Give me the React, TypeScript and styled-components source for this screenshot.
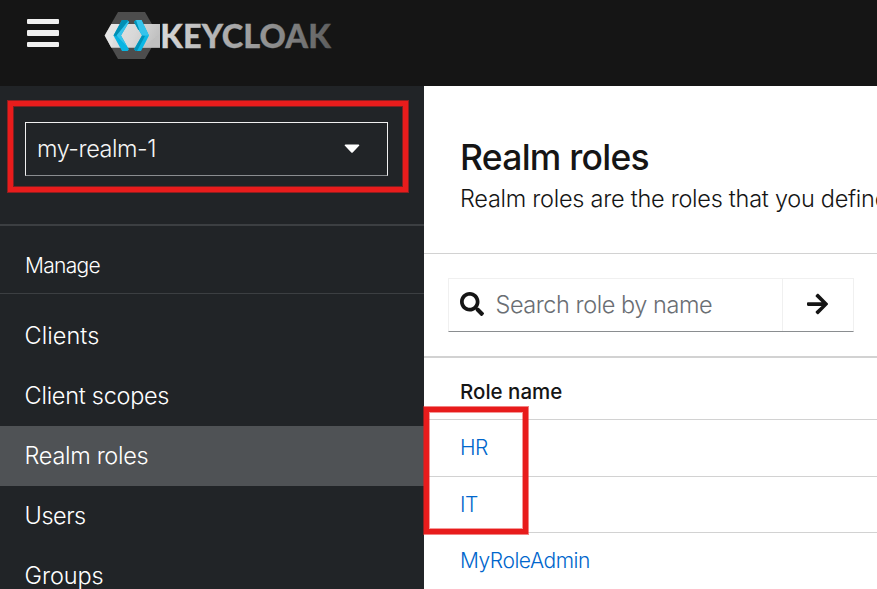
import React from 'react';
import styled, { createGlobalStyle } from 'styled-components';

const GlobalStyle = createGlobalStyle`
  *, *::before, *::after { box-sizing: border-box; }
  html, body { margin: 0; padding: 0; overflow: hidden; }
  body { background: #fff; font-family: 'Inter', sans-serif; font-weight: 300; color: #151515; }
  button, input { font: inherit; }
`;

const Page = styled.div`
  display: flex;
  flex-direction: column;
  width: 100%;
  height: 100vh;
  overflow: hidden;
`;

const Masthead = styled.header`
  display: flex;
  align-items: flex-start;
  flex: 0 0 86px;
  background: #151515;
`;

const MenuButton = styled.button`
  display: flex;
  flex-direction: column;
  gap: 6px;
  margin: 19px 0 0 27px;
  padding: 0;
  border: 0;
  background: none;
`;

const MenuBar = styled.span`
  width: 32px;
  height: 5.3px;
  border-radius: 1px;
  background: #f0f0f0;
`;

const Logo = styled.svg`
  display: block;
  margin: 11px 0 0 45px;
`;

const Body = styled.div`
  display: flex;
  flex: 1;
  min-height: 0;
`;

const Sidebar = styled.aside`
  flex: 0 0 424px;
  background: #212427;
  color: #fff;
  overflow: hidden;
`;

const RealmArea = styled.div`
  height: 140px;
  padding: 36px 36px 0 25px;
  border-bottom: 2px solid #3c3f42;
`;

const RealmSelect = styled.button`
  position: relative;
  display: flex;
  align-items: center;
  justify-content: space-between;
  width: 363px;
  height: 54px;
  padding: 0 27px 1px 11px;
  border: 1px solid #f0f0f0;
  border-bottom-color: #8a8d90;
  background: none;
  color: #f5f5f5;
  font-size: 23.5px;
  letter-spacing: -0.45px;
  text-align: left;
`;

const Highlight = styled.span<{ $x: number; $y: number; $w: number; $h: number }>`
  position: absolute;
  left: ${(p) => p.$x}px;
  top: ${(p) => p.$y}px;
  width: ${(p) => p.$w}px;
  height: ${(p) => p.$h}px;
  border: 5px solid #e81c1c;
  box-shadow: 0 0 0 1px rgba(232, 28, 28, 0.55), inset 0 0 0 1px rgba(232, 28, 28, 0.45);
  pointer-events: none;
`;

const GroupTitle = styled.h2`
  height: 68px;
  margin: 0;
  padding: 0 25px;
  border-bottom: 1px solid #3c3f42;
  font-size: 21px;
  font-weight: 300;
  line-height: 79px;
  letter-spacing: -0.7px;
`;

const NavList = styled.nav`
  padding-top: 12px;
`;

const NavItem = styled.a<{ $current?: boolean; $tracking: number }>`
  display: block;
  height: 60px;
  padding: 0 24.6px;
  background: ${(p) => (p.$current ? '#4f5255' : 'transparent')};
  color: #fff;
  font-size: 23.5px;
  line-height: 60px;
  letter-spacing: ${(p) => p.$tracking}px;
`;

const Main = styled.main`
  flex: 1;
  min-width: 0;
  background: #fff;
`;

const Intro = styled.section`
  height: 168px;
  padding: 48px 0 0 36px;
  border-bottom: 1px solid #d2d2d2;
  white-space: nowrap;
`;

const Title = styled.h1`
  margin: 0;
  font-size: 35.5px;
  font-weight: 450;
  line-height: 47px;
  letter-spacing: -0.75px;
`;

const Description = styled.p`
  margin: 0;
  font-size: 23.5px;
  line-height: 36px;
  letter-spacing: -0.27px;
`;

const Toolbar = styled.div`
  height: 104px;
  padding: 24px 0 0 24px;
  border-bottom: 2px solid #d2d2d2;
`;

const SearchGroup = styled.div`
  display: flex;
  width: 406px;
  height: 54px;
  border: 1px solid #f0f0f0;
  border-bottom-color: #8a8d90;
`;

const SearchField = styled.div`
  display: flex;
  align-items: center;
  flex: 1;
  gap: 11.5px;
  padding: 0 0 2px 11px;
  border-right: 1px solid #f0f0f0;
`;

const SearchInput = styled.input`
  width: 260px;
  padding: 0;
  border: 0;
  outline: 0;
  background: none;
  font-size: 23.5px;
  letter-spacing: -0.45px;
  &::placeholder { color: #6a6e73; opacity: 1; }
`;

const SearchButton = styled.button`
  display: flex;
  align-items: center;
  justify-content: center;
  width: 70px;
  padding: 0 1px 2px 0;
  border: 0;
  background: none;
`;

const Roles = styled.section`
  position: relative;
`;

const RolesHeader = styled.div`
  height: 62px;
  padding-left: 36px;
  border-bottom: 1px solid #d2d2d2;
  font-size: 20.5px;
  font-weight: 500;
  line-height: 68px;
`;

const RoleRow = styled.div<{ $height: number }>`
  height: ${(p) => p.$height}px;
  padding-left: 36px;
  border-bottom: 1px solid #d2d2d2;
  line-height: 56px;
`;

const RoleLink = styled.a`
  color: #06c;
  font-size: 21px;
  letter-spacing: -0.45px;
`;

const navItems = [
  { label: 'Clients', tracking: 0.05 },
  { label: 'Client scopes', tracking: -0.28 },
  { label: 'Realm roles', tracking: -0.32 },
  { label: 'Users', tracking: -0.5 },
  { label: 'Groups', tracking: -0.1 },
];

const roles = [
  { name: 'HR', height: 57 },
  { name: 'IT', height: 56 },
  { name: 'MyRoleAdmin', height: 57 },
];

function KeycloakLogo() {
  return (
    <Logo width="230" height="50" viewBox="104 11 230 50" role="img" aria-label="Keycloak">
      <defs>
        <linearGradient id="wordmark" gradientUnits="userSpaceOnUse" x1="160" y1="0" x2="332" y2="10">
          <stop offset="0" stopColor="#dadada" />
          <stop offset="0.35" stopColor="#b2b2b2" />
          <stop offset="0.7" stopColor="#8a8a8a" />
          <stop offset="1" stopColor="#5e5e5e" />
        </linearGradient>
        <linearGradient id="band" x1="0" y1="0" x2="1" y2="0.2">
          <stop offset="0" stopColor="#e4e4e4" />
          <stop offset="0.6" stopColor="#d8d8d8" />
          <stop offset="1" stopColor="#c2c2c2" />
        </linearGradient>
      </defs>
      <path d="M118 12h27l13.500 23.500L145 59h-27l-13.500-23.500z" fill="#4d4d4d" />
      <path d="M111.300 24H160v23.700h-48.700L104.700 35.500z" fill="url(#band)" />
      <path d="M142 47.700l18-14v14z" fill="#bdbdbd" opacity=".5" />
      <path d="M111.300 24h7l-7 23.700L104.700 35.500z" fill="#eee" opacity=".4" />
      <path d="M122 20h5.200l1.800 2-8 13.500 8 14-1.500 1.500H122l-8.500-15.500z" fill="#0ab4e2" />
      <path d="M122 20h5.200l1 1L118 36.500l-4.500-1z" fill="#008fb4" />
      <path d="M128.200 21l.8 1-8 13.500 6 11-10.500-11z" fill="#35c3eb" />
      <path d="M134 22l2-2h5.500l7.500 15.500-8 15.500h-5l-2-1.500 8-14z" fill="#0ab8e6" />
      <path d="M136 20h5.500l7.500 15.500h-7L135 23z" fill="#35c3eb" />
      <path d="M134 22l2-2 3.500 10.500-1.500-1z" fill="#0092b8" />
      <path d="M134 49.500l8-14 3 .5-8 15h-1z" fill="#0092b8" />
      <text
        x="160.300"
        y="47.600"
        fontFamily="Lato, sans-serif"
        fontSize="32.500"
        fontWeight="900"
        textLength="170.500"
        lengthAdjust="spacing"
        fill="url(#wordmark)"
        stroke="url(#wordmark)"
        strokeWidth="0.300"
      >
        KEYCLOAK
      </text>
    </Logo>
  );
}

function SearchIcon() {
  return (
    <svg width="24" height="24" viewBox="0 0 512 512" fill="#151515" aria-hidden="true">
      <path d="M505 442.700L405.300 343c-4.500-4.500-10.600-7-17-7H372c27.600-35.300 44-79.700 44-128C416 93.100 322.900 0 208 0S0 93.100 0 208s93.100 208 208 208c48.300 0 92.700-16.400 128-44v16.300c0 6.400 2.500 12.500 7 17l99.700 99.700c9.400 9.400 24.600 9.400 33.900 0l28.300-28.300c9.400-9.400 9.400-24.600.1-34zM208 336c-70.700 0-128-57.200-128-128 0-70.700 57.200-128 128-128 70.700 0 128 57.200 128 128 0 70.700-57.200 128-128 128z" />
    </svg>
  );
}

function ArrowIcon() {
  return (
    <svg width="21" height="24" viewBox="0 0 448 512" fill="#151515" aria-hidden="true">
      <path d="M190.500 66.900l22.200-22.200c9.400-9.400 24.600-9.400 33.900 0L441 239c9.400 9.400 9.400 24.600 0 33.900L246.600 467.300c-9.400 9.400-24.600 9.400-33.900 0l-22.200-22.200c-9.500-9.500-9.300-25 .4-34.300L311.400 296H24c-13.300 0-24-10.700-24-24v-32c0-13.300 10.700-24 24-24h287.400L190.900 101.200c-9.800-9.300-10-24.800-.4-34.300z" />
    </svg>
  );
}

export default function App() {
  return (
    <>
      <GlobalStyle />
      <Page>
        <Masthead>
          <MenuButton aria-label="Toggle navigation">
            <MenuBar />
            <MenuBar />
            <MenuBar />
          </MenuButton>
          <KeycloakLogo />
        </Masthead>
        <Body>
          <Sidebar>
            <RealmArea>
              <RealmSelect>
                my-realm-1
                <svg width="16" height="9" viewBox="0 0 16 9" fill="#fff" aria-hidden="true">
                  <path d="M1.500 0.500h13c.8 0 1.100.8.600 1.300L8.700 8.400c-.4.400-1 .4-1.400 0L.9 1.800C.4 1.300.7.500 1.500.500z" />
                </svg>
                <Highlight $x={-18} $y={-22} $w={400} $h={91} />
              </RealmSelect>
            </RealmArea>
            <GroupTitle>Manage</GroupTitle>
            <NavList>
              {navItems.map((item) => (
                <NavItem
                  key={item.label}
                  $current={item.label === 'Realm roles'}
                  $tracking={item.tracking}
                >
                  {item.label}
                </NavItem>
              ))}
            </NavList>
          </Sidebar>
          <Main>
            <Intro>
              <Title>Realm roles</Title>
              <Description>Realm roles are the roles that you define</Description>
            </Intro>
            <Toolbar>
              <SearchGroup>
                <SearchField>
                  <SearchIcon />
                  <SearchInput placeholder="Search role by name" />
                </SearchField>
                <SearchButton aria-label="Search">
                  <ArrowIcon />
                </SearchButton>
              </SearchGroup>
            </Toolbar>
            <Roles>
              <RolesHeader>Role name</RolesHeader>
              {roles.map((role) => (
                <RoleRow key={role.name} $height={role.height}>
                  <RoleLink>{role.name}</RoleLink>
                </RoleRow>
              ))}
              <Highlight $x={0} $y={49} $w={104} $h={127} />
            </Roles>
          </Main>
        </Body>
      </Page>
    </>
  );
}
